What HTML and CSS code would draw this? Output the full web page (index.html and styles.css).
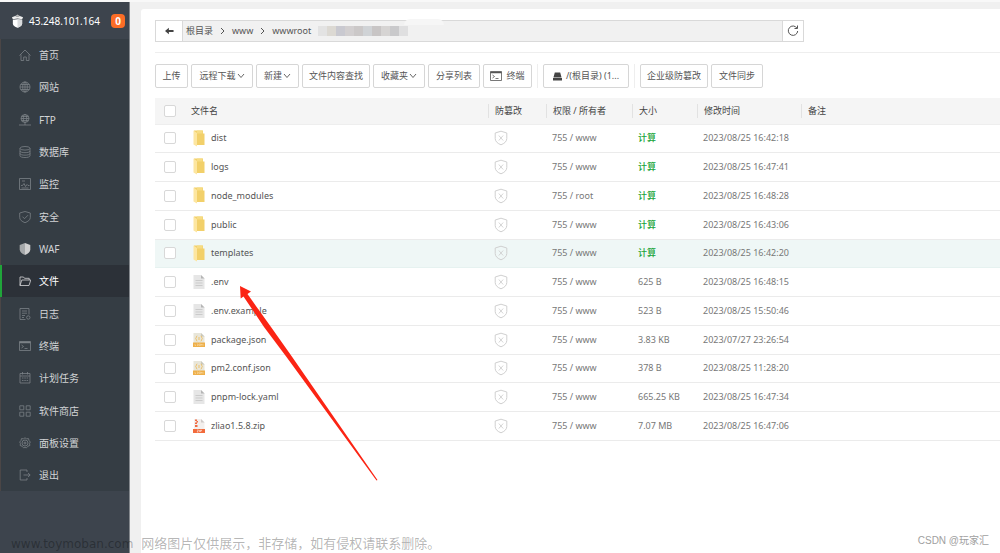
FILE: index.html
```html
<!DOCTYPE html>
<html lang="zh-CN">
<head>
<meta charset="utf-8">
<title>文件</title>
<link rel="stylesheet" href="styles.css">
</head>
<body>
<svg class="defs" aria-hidden="true">
  <symbol id="folder" viewBox="0 0 12 17"><path d="M1 .5h9v3h1.500v11.500H4L1 13z" fill="#f2d06a"/><path d="M4 .5h5.500v3H4z" fill="#f7dc83"/><path d="M.5.500 4 3v13.500L.5 14.500z" fill="#fde6a0"/></symbol>
  <symbol id="doc" viewBox="0 0 12 14"><path d="M.5 0H8l3.500 3.500V14H.5z" fill="#e6e6e6"/><path d="M8 0l3.500 3.500H8z" fill="#b5b5b5"/><path d="M2.500 5.500h7M2.500 8h7M2.500 10.500h7" stroke="#cbcbcb"/></symbol>
  <symbol id="json" viewBox="0 0 12 14"><path d="M.5 0H8l3.500 3.500V14H.5z" fill="#e8e6da"/><path d="M8 0l3.500 3.500H8z" fill="#c9c8bd"/><path d="M4.300 3c-1.500 0-.6 2-1.600 2.500 1 .5.1 2.500 1.600 2.500M7.700 3c1.500 0 .6 2 1.600 2.500-1 .5-.1 2.500-1.600 2.500M6 4v3" fill="none" stroke="#eebc5c" stroke-width=".9"/><path d="M0 9.500h12V14H0z" fill="#eeb04a"/><path d="M2 11v1.500h1M4 11h1v1.500H4M6 11h1.500v1.500H6zM8.500 12.500V11l1.500 1.500V11" fill="none" stroke="#fae3b8" stroke-width=".5"/></symbol>
  <symbol id="zip" viewBox="0 0 12 14"><path d="M1 0h7l3.500 3.500V14H1z" fill="#f3efed"/><path d="M8 0l3.500 3.500H8z" fill="#cfcac8"/><path d="M2 .5h2v1.500H2zM3.500 2h1.500v1.500H3.500zM2 3.500h2V5H2zM2 6h2.500v2H2z" fill="#f06a42"/><path d="M0 10h12v4H0z" fill="#f26b3c"/><path d="M4 11h1.500L4 13h1.500M6.500 11v2M7.500 13v-2h1v1h-1" fill="none" stroke="#fff" stroke-width=".5"/></symbol>
  <symbol id="guard" viewBox="0 0 14 16"><path d="M7 1.200 12.800 3v5.500c0 3-2.500 5-5.800 6.300C3.700 13.500 1.200 11.500 1.200 8.500V3z" fill="none" stroke="#d0d0d0"/><path d="m4.800 5.500 4.400 5M9.200 5.500l-4.400 5" stroke="#d0d0d0" stroke-width=".9"/></symbol>
  <symbol id="down" viewBox="0 0 8 6"><path d="m1 1 3 3.500L7 1" fill="none" stroke="#555" stroke-width=".9"/></symbol>
  <symbol id="term" viewBox="0 0 12 10"><path d="M.5.5h11v9H.5z" fill="none" stroke="currentColor" stroke-width=".8"/><path d="M.5 1.500h11" stroke="currentColor" stroke-width="1.500"/><path d="m2.500 4 2 1.500-2 1.500M5.500 7.500h3" fill="none" stroke="currentColor" stroke-width=".8"/></symbol>
</svg>

<div class="app">
  <aside class="side">
    <header class="host">
      <svg class="logo" viewBox="0 0 14 15"><path d="M1 3.500 4.500 2 7 3l2.500-1L13 3.500l-1 2-5-.8-5 .8z" fill="#eee"/><path d="M4.500 2 7 .5 9.500 2 7 3z" fill="#bbb"/><path d="M2 6.200 7 5.500l5 .7v4.300c0 2-2 3.300-5 4.300-3-1-5-2.300-5-4.300z" fill="#fff"/><path d="M7 5.500l5 .7v4.300c0 2-2 3.300-5 4.300z" fill="#d9dbdd"/></svg>
      <span class="ip">43.248.101.164</span><span class="count">0</span>
    </header>
    <nav class="menu">
      <a href="#"><svg viewBox="0 0 12 12"><path d="M.5 6.500 6 1l5.500 5.500M2 5.500v6h2.700V8h2.600v3.500H10v-6"/></svg>首页</a>
      <a href="#"><svg viewBox="0 0 12 12"><circle cx="6" cy="6" r="5"/><ellipse cx="6" cy="6" rx="2.300" ry="5"/><path d="M1 6h10M6 1v10M1.700 3.500h8.600M1.700 8.500h8.600"/></svg>网站</a>
      <a href="#"><svg viewBox="0 0 12 12"><circle cx="6" cy="4.500" r="4"/><ellipse cx="6" cy="4.500" rx="1.800" ry="4"/><path d="M2 4.500h8M2.500 2.500h7M2.500 6.500h7M6 8.500V11M0 11h12"/></svg>FTP</a>
      <a href="#"><svg viewBox="0 0 12 12"><ellipse cx="6" cy="2.300" rx="5" ry="1.800"/><path d="M1 2.300v7.500c0 2.300 10 2.300 10 0V2.300M1 5c0 2.200 10 2.200 10 0M1 7.500c0 2.200 10 2.200 10 0"/></svg>数据库</a>
      <a href="#"><svg viewBox="0 0 12 12"><path d="M.5.5h11v11H.5zM2 7.500h1.500L5 5.500l1.500 3L8 6.500l1 1h1.500M3 3h3M2.500 10h7"/></svg>监控</a>
      <a href="#"><svg viewBox="0 0 12 12"><path d="M6 .5 11.300 2v4.500c0 2.500-2.300 4-5.300 5.200C3 10.500.7 9 .7 6.500V2zM3.500 5.700l2 2 3.500-3.500"/></svg>安全</a>
      <a href="#"><svg viewBox="0 0 12 12"><path class="mid" d="M6 0 .7 2v4.500C.7 9 3 10.800 6 12z"/><path class="light" d="m6 0 5.300 2v4.500c0 2.500-2.300 4.300-5.300 5.500z"/></svg>WAF</a>
      <a href="#" class="on"><svg viewBox="0 0 12 12"><path d="M1 10.500V2h3.500l1 1.300h4.700V5M1 10.500 2.800 5h9L10 10.500z"/></svg>文件</a>
      <a href="#"><svg viewBox="0 0 12 12"><path d="M6.500 11.500H1V.5h9v6M3 3h5M3 5.200h5M3 7.500h3M3 9.500h2"/><circle cx="9.300" cy="9.500" r="1.700"/></svg>日志</a>
      <a href="#"><svg viewBox="0 0 12 10"><use href="#term"/></svg>终端</a>
      <a href="#"><svg viewBox="0 0 12 12"><path d="M1 1.500h10v9.500H1zM1 4h10M3.500 0v2.500M8.500 0v2.500M3 6h1.500M5.300 6h1.500M7.600 6h1.500M3 8.500h1.500M5.300 8.500h1.500M7.600 8.500h1.500"/></svg>计划任务</a>
      <a href="#"><svg viewBox="0 0 12 12"><path d="M.8.8h4v4h-4zM7.200.8h4v4h-4zM.8 7.200h4v4h-4zM7.200 7.200h4v4h-4z"/></svg>软件商店</a>
      <a href="#"><svg viewBox="0 0 12 12"><path d="m6 .8 1.500 1 2-.2.500 1.900 1.300 1.500-.7 1.500.2 2-1.900.7L7.500 10.800 6 10.500l-1.500.3-1.400-1.600-1.900-.7.200-2L.7 5 2 3.500l.5-1.900 2 .2z"/><circle cx="6" cy="6" r="3"/><circle cx="6" cy="6" r="1"/></svg>面板设置</a>
      <a href="#"><svg viewBox="0 0 12 12"><path d="M8 3V1H1.200v10H8V9M4.500 6H11M9 4l2.200 2L9 8"/></svg>退出</a>
    </nav>
  </aside>

  <main class="card">
    <div class="path">
      <button class="back" aria-label="返回"><svg viewBox="0 0 10 8"><path d="M0 4 4.300.3v2.500H9.500v2.400H4.300v2.500z" fill="#444"/></svg></button>
      <div class="crumbs">
        <a href="#">根目录</a><svg class="sep" viewBox="0 0 5 8"><path d="m1 1 3 3-3 3"/></svg>
        <a href="#">www</a><svg class="sep" viewBox="0 0 5 8"><path d="m1 1 3 3-3 3"/></svg>
        <a href="#">wwwroot</a>
        <span class="mosaic"><i></i><i></i><i></i><i></i><i></i><i></i><i></i><i></i><i></i><i></i></span>
      </div>
      <button class="reload" aria-label="刷新"><svg viewBox="0 0 12 12"><path d="M10 3.200A4.700 4.700 0 1 0 10.700 6M10.500.5v3H7.500" fill="none" stroke="#555"/></svg></button>
      <span class="smear"></span>
    </div>

    <div class="tools">
      <button class="w33">上传</button>
      <button class="w62">远程下载<svg class="down"><use href="#down"/></svg></button>
      <button class="w43">新建<svg class="down"><use href="#down"/></svg></button>
      <button class="w68">文件内容查找</button>
      <button class="w52">收藏夹<svg class="down"><use href="#down"/></svg></button>
      <button class="w52">分享列表</button>
      <span class="group"><button class="w49"><svg class="term"><use href="#term"/></svg>终端</button></span>
      <span class="group"><button class="w86"><svg class="disk" viewBox="0 0 10 9"><path d="M2 0h6l1.500 5.500h-9zM0 6.200h10V9H0z" fill="#444"/></svg>/(根目录) (1...</button></span>
      <button class="w68">企业级防篡改</button>
      <button class="w52">文件同步</button>
    </div>

    <table class="files">
      <colgroup><col class="c1"><col><col class="c3"><col class="c4"><col class="c5"><col class="c6"><col class="c7"></colgroup>
      <thead><tr><th><input type="checkbox" aria-label="全选"></th><th>文件名</th><th>防篡改</th><th>权限 / 所有者</th><th>大小</th><th>修改时间</th><th>备注</th></tr></thead>
      <tbody>
        <tr><td><input type="checkbox" aria-label="dist"></td><td><span class="name"><svg class="folder"><use href="#folder"/></svg>dist</span></td><td><svg class="guard"><use href="#guard"/></svg></td><td>755 / www</td><td><a href="#">计算</a></td><td>2023/08/25 16:42:18</td><td></td></tr>
        <tr><td><input type="checkbox" aria-label="logs"></td><td><span class="name"><svg class="folder"><use href="#folder"/></svg>logs</span></td><td><svg class="guard"><use href="#guard"/></svg></td><td>755 / www</td><td><a href="#">计算</a></td><td>2023/08/25 16:47:41</td><td></td></tr>
        <tr><td><input type="checkbox" aria-label="node_modules"></td><td><span class="name"><svg class="folder"><use href="#folder"/></svg>node_modules</span></td><td><svg class="guard"><use href="#guard"/></svg></td><td>755 / root</td><td><a href="#">计算</a></td><td>2023/08/25 16:48:28</td><td></td></tr>
        <tr><td><input type="checkbox" aria-label="public"></td><td><span class="name"><svg class="folder"><use href="#folder"/></svg>public</span></td><td><svg class="guard"><use href="#guard"/></svg></td><td>755 / www</td><td><a href="#">计算</a></td><td>2023/08/25 16:43:06</td><td></td></tr>
        <tr class="hover"><td><input type="checkbox" aria-label="templates"></td><td><span class="name"><svg class="folder"><use href="#folder"/></svg>templates</span></td><td><svg class="guard"><use href="#guard"/></svg></td><td>755 / www</td><td><a href="#">计算</a></td><td>2023/08/25 16:42:20</td><td></td></tr>
        <tr><td><input type="checkbox" aria-label=".env"></td><td><span class="name"><svg class="doc"><use href="#doc"/></svg>.env</span></td><td><svg class="guard"><use href="#guard"/></svg></td><td>755 / www</td><td>625 B</td><td>2023/08/25 16:48:15</td><td></td></tr>
        <tr><td><input type="checkbox" aria-label=".env.example"></td><td><span class="name"><svg class="doc"><use href="#doc"/></svg>.env.example</span></td><td><svg class="guard"><use href="#guard"/></svg></td><td>755 / www</td><td>523 B</td><td>2023/08/25 15:50:46</td><td></td></tr>
        <tr><td><input type="checkbox" aria-label="package.json"></td><td><span class="name"><svg class="doc"><use href="#json"/></svg>package.json</span></td><td><svg class="guard"><use href="#guard"/></svg></td><td>755 / www</td><td>3.83 KB</td><td>2023/07/27 23:26:54</td><td></td></tr>
        <tr><td><input type="checkbox" aria-label="pm2.conf.json"></td><td><span class="name"><svg class="doc"><use href="#json"/></svg>pm2.conf.json</span></td><td><svg class="guard"><use href="#guard"/></svg></td><td>755 / www</td><td>378 B</td><td>2023/08/25 11:28:20</td><td></td></tr>
        <tr><td><input type="checkbox" aria-label="pnpm-lock.yaml"></td><td><span class="name"><svg class="doc"><use href="#doc"/></svg>pnpm-lock.yaml</span></td><td><svg class="guard"><use href="#guard"/></svg></td><td>755 / www</td><td>665.25 KB</td><td>2023/08/25 16:47:34</td><td></td></tr>
        <tr><td><input type="checkbox" aria-label="zliao1.5.8.zip"></td><td><span class="name"><svg class="doc"><use href="#zip"/></svg>zliao1.5.8.zip</span></td><td><svg class="guard"><use href="#guard"/></svg></td><td>755 / www</td><td>7.07 MB</td><td>2023/08/25 16:47:06</td><td></td></tr>
      </tbody>
    </table>
  </main>
</div>

<svg class="arrow" viewBox="0 0 138 196" aria-hidden="true"><path d="M0 0 11 5.500 7.500 8 31 41 51.500 70 137.500 194 136.500 194.500 46.500 71 24 41 3.500 10.500 .7 12.500z" fill="#fb2414"/></svg>
<div class="notice"><span class="site">www.toymoban.com</span><span>网络图片仅供展示，非存储，如有侵权请联系删除。</span></div>
<div class="credit">CSDN @玩家汇</div>
</body>
</html>
```
FILE: styles.css
```css
* { box-sizing: border-box; }
body {
  margin: 0;
  background: #f0f0f0;
  font: 9px/14px "Noto Sans", "Noto Sans CJK SC", sans-serif;
  color: #555;
  overflow: hidden;
}
a { color: inherit; text-decoration: none; }
svg { flex: none; display: block; }
button { font: inherit; color: inherit; padding: 0; cursor: pointer; }
.defs { position: absolute; width: 0; height: 0; }

.app {
  display: flex;
  min-height: 100vh;
  border-top: 2px solid #f8f8f8;
}

.side {
  flex: none;
  width: 130px;
  background: #3d444d;
  border-right: 1px solid #84888d;
}
.host {
  display: flex;
  align-items: center;
  height: 37px;
  padding-left: 11px;
  color: #fff;
  font-size: 10px;
}
.logo { width: 13px; height: 14px; margin-right: 5px; }
.ip { flex: 1; }
.count {
  width: 14px;
  margin-right: 4px;
  border-radius: 4px;
  background: #fc6d26;
  font-weight: 700;
  text-align: center;
}
.menu { background: #353d44; }
.menu a {
  display: flex;
  align-items: center;
  gap: 8px;
  height: 32px;
  padding-left: 18px;
  border-left: 1px solid #4b4646;
  color: #d2d4d6;
  font-size: 10px;
}
.menu a:nth-child(3n) { height: 33px; }
.menu a.on {
  padding-left: 17px;
  border-left: 2px solid #20a53a;
  background: #2c3138;
  color: #fff;
}
.menu svg {
  width: 12px;
  height: 12px;
  color: #7b8186;
  fill: none;
  stroke: #7b8186;
  stroke-width: 0.8;
}
.menu .on svg { stroke: #d5d6d8; }
.menu .light { fill: #cfcfcf; stroke: none; }
.menu .mid { fill: #a5a8aa; stroke: none; }

.card {
  flex: 1;
  min-width: 0;
  margin: 7px 0 0 11px;
  padding: 11px 0 0 14px;
  border-radius: 3px 0 0 0;
  background: #fff;
}

.path {
  position: relative;
  display: flex;
  max-width: 649px;
  height: 22px;
  border: 1px solid #d9d9d9;
  background: #f1f1f1;
}
.path button {
  display: flex;
  align-items: center;
  justify-content: center;
  border: 0;
  background: #fff;
}
.path .back { width: 27px; border-right: 1px solid #d9d9d9; }
.path .reload { width: 21px; border-left: 1px solid #d9d9d9; }
.back svg { width: 9px; height: 8px; }
.reload svg { width: 12px; height: 12px; }
.crumbs { flex: 1; display: flex; align-items: center; gap: 7px; padding-left: 3px; }
.sep { width: 5px; height: 8px; fill: none; stroke: #555; }
.mosaic { display: flex; height: 10px; overflow: hidden; }
.mosaic i { width: 9px; background: #e3e3e3; }
.mosaic i:nth-child(2) { background: #dcd9d3; }
.mosaic i:nth-child(3) { background: #c9c9d0; }
.mosaic i:nth-child(4) { background: #d2cfd0; }
.mosaic i:nth-child(5) { background: #cbc8c8; }
.mosaic i:nth-child(6) { background: #d0d3d6; }
.mosaic i:nth-child(7) { background: #c8c5c5; }
.mosaic i:nth-child(8) { background: #d6d4d3; }
.mosaic i:nth-child(9) { background: #c9c9cb; }
.mosaic i:nth-child(10) { background: #dfdfe0; }
.smear {
  position: absolute;
  left: 248px;
  top: -2px;
  width: 40px;
  height: 6px;
  border-radius: 8px 8px 0 0;
  background: #f6f6f6;
}

.tools {
  display: flex;
  gap: 3px;
  margin-top: 10px;
  padding: 11px 0 10px;
  border-top: 1px solid #eee;
}
.tools button {
  display: flex;
  align-items: center;
  justify-content: center;
  height: 24px;
  border: 1px solid #d6d6d6;
  border-radius: 2px;
  background: #fff;
  white-space: nowrap;
}
.group { padding-right: 5px; border-right: 1px solid #eee; margin-right: 2px; }
.w33 { width: 33px; }
.w43 { width: 43px; }
.w49 { width: 49px; }
.w52 { width: 52px; }
.w62 { width: 62px; }
.w68 { width: 68px; }
.w86 { width: 86px; }
.down { width: 8px; height: 6px; margin-left: 1px; }
.term { width: 12px; height: 10px; margin-right: 4px; }
.disk { width: 9px; height: 9px; margin-right: 4px; }

.files { width: 100%; table-layout: fixed; border-collapse: collapse; }
.c1 { width: 36px; }
.c3 { width: 58px; }
.c4 { width: 86px; }
.c5 { width: 65px; }
.c6 { width: 104px; }
.c7 { width: 199px; }
.files th {
  height: 26px;
  padding: 0 0 0 7px;
  background:
    linear-gradient(#e2e2e2, #e2e2e2) left center / 1px 14px no-repeat #f5f5f5;
  border-bottom: 1px solid #eee;
  font-weight: 400;
  text-align: left;
  color: #444;
}
.files th:nth-child(-n+2) { background: #f5f5f5; padding-left: 0; }
.files td { height: 29px; padding: 0 0 0 6px; border-bottom: 1px solid #ebebeb; color: #777; }
.files tr:nth-child(4n+1) td { height: 28px; }
.files th:first-child, .files td:first-child { padding-left: 9px; }
.files td:nth-child(2) { padding-left: 2px; color: #555; }
.files .hover td { background: #eff7f6; border-color: #e6f2f0; }
.files td a { color: #20a53a; font-weight: 500; }
.files input {
  display: block;
  appearance: none;
  width: 12px;
  height: 12px;
  margin: 0;
  border: 1px solid #d8d8d8;
  border-radius: 2px;
  background: #fff;
}
.name { display: flex; align-items: center; gap: 6px; }
.folder { width: 12px; height: 17px; }
.doc { width: 12px; height: 14px; }
.guard { width: 14px; height: 16px; }

.arrow { position: absolute; left: 240px; top: 286px; width: 138px; height: 196px; }
.notice {
  position: absolute;
  left: 11px;
  bottom: 0;
  display: flex;
  align-items: baseline;
  gap: 8px;
  color: rgba(0, 0, 0, 0.3);
  font: 13px/18px "Noto Sans CJK SC", sans-serif;
}
.site { font: 12px/18px "DejaVu Sans", sans-serif; }
.credit {
  position: absolute;
  right: 11px;
  bottom: 5px;
  color: #a0a0a0;
  font: 10px/14px "Liberation Sans", "Noto Sans CJK SC", sans-serif;
}
```
